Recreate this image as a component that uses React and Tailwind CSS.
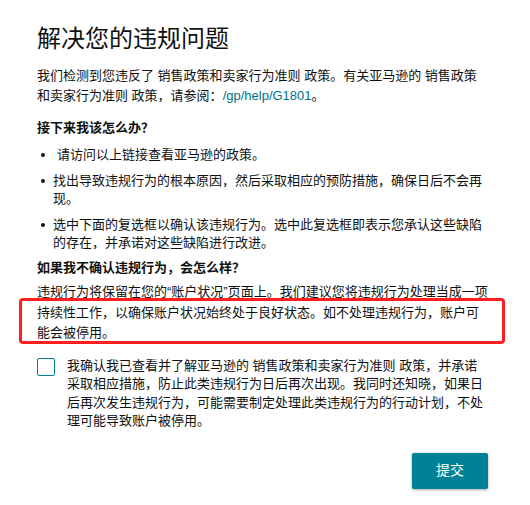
export default function App() {
  const bullets = [
    { text: "请访问以上链接查看亚马逊的政策。", lead: true },
    { text: "找出导致违规行为的根本原因，然后采取相应的预防措施，确保日后不会再现。" },
    { text: "选中下面的复选框以确认该违规行为。选中此复选框即表示您承认这些缺陷的存在，并承诺对这些缺陷进行改进。" },
  ];

  return (
    <div className="relative w-[530px] min-h-[505px] bg-white px-[37px] pt-[23px] text-[#0f1111] font-['Liberation_Sans','Noto_Sans_CJK_SC',sans-serif]">
      <div className="w-[451px]">
        <h1 className="text-[24px] leading-[32px] font-normal">解决您的违规问题</h1>

        <p className="mt-[11px] text-[13px] leading-[20px]">
          我们检测到您违反了 销售政策和卖家行为准则 政策。有关亚马逊的 销售政策和卖家行为准则 政策，请参阅：
          <span className="text-[#007185]">/gp/help/G1801</span>。
        </p>

        <h2 className="mt-[12px] text-[13px] leading-[20px] font-bold">接下来我该怎么办？</h2>

        <ul className="mt-[8px] space-y-[8px] text-[13px] leading-[18px]">
          {bullets.map((b, i) => (
            <li key={i} className="flex">
              <span className="w-[16px] shrink-0 flex items-start pt-[7px]">
                <span className="ml-[4px] w-[4px] h-[4px] rounded-full bg-[#0f1111]" />
              </span>
              <span className={b.lead ? "pl-[4px]" : ""}>{b.text}</span>
            </li>
          ))}
        </ul>

        <h2 className="mt-[6px] text-[13px] leading-[20px] font-bold">如果我不确认违规行为，会怎么样？</h2>

        <p className="mt-[4px] w-[460px] text-[13px] leading-[20.5px]">
          违规行为将保留在您的“账户状况”页面上。我们建议您将违规行为处理当成一项持续性工作，以确保账户状况始终处于良好状态。如不处理违规行为，账户可
          <br />
          能会被停用。
        </p>

        <label className="mt-[13px] flex gap-[12px]">
          <span className="mt-[1px] w-[18px] h-[18px] shrink-0 border-[1.5px] border-[#008296] rounded-[2px] bg-white" />
          <span className="text-[13px] leading-[18.5px]">
            我确认我已查看并了解亚马逊的 销售政策和卖家行为准则 政策，并承诺采取相应措施，防止此类违规行为日后再次出现。我同时还知晓，如果日后再次发生违规行为，可能需要制定处理此类违规行为的行动计划，不处理可能导致账户被停用。
          </span>
        </label>

        <div className="mt-[22px] flex justify-end">
          <button className="w-[76px] h-[36px] bg-[#008296] text-white text-[14px] rounded-[2px] shadow-[0_1px_3px_rgba(0,0,0,0.35)]">
            提交
          </button>
        </div>
      </div>

      <div className="absolute left-[19px] top-[298px] w-[486px] h-[46px] border-[3px] border-[#ff1f1f] rounded-[4px] pointer-events-none" />
    </div>
  );
}
